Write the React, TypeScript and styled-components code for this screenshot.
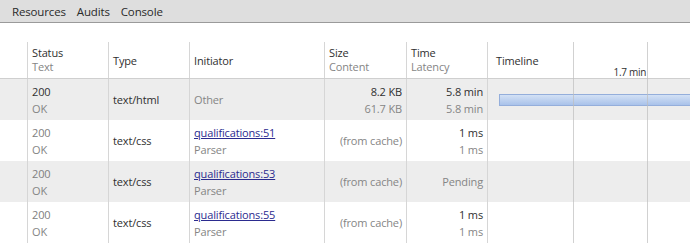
import React from "react";
import styled, { createGlobalStyle } from "styled-components";

const GlobalStyle = createGlobalStyle`
  html, body { margin: 0; padding: 0; background: #fff; overflow: hidden; }
  body { font-family: "Open Sans", "Noto Sans", "DejaVu Sans", sans-serif; font-size: 11px; letter-spacing: -0.15px; color: #303030; }
`;

const COLS = "27px 81px 81px 135px 82px 81px 1fr";

const Page = styled.div`
  width: 690px;
  height: 243px;
  overflow: hidden;
  display: flex;
  flex-direction: column;
`;

const Toolbar = styled.div`
  height: 22px;
  background: #dedede;
  border-bottom: 1px solid #9a9a9a;
  display: flex;
  align-items: center;
  gap: 11px;
  padding-left: 12px;
  font-size: 11.5px;
  color: #2a2a2a;
  flex-shrink: 0;
`;

const Tab = styled.span`
  line-height: 22px;
  padding-top: 1px;
`;

const Spacer = styled.div`
  height: 19px;
  flex-shrink: 0;
`;

const Table = styled.div`
  position: relative;
  flex: 1;
`;

const HeaderRow = styled.div`
  display: grid;
  grid-template-columns: ${COLS};
  height: 36px;
  border-bottom: 1px solid #cfcfcf;
`;

const Row = styled.div<{ $alt: boolean }>`
  display: grid;
  grid-template-columns: ${COLS};
  height: 41px;
  background: ${(p) => (p.$alt ? "#ededed" : "#ffffff")};
`;

const Cell = styled.div<{ $right?: boolean; $first?: boolean; $lh?: number }>`
  border-left: ${(p) => (p.$first ? "none" : "1px solid #d6d6d6")};
  padding: 0 4px;
  display: flex;
  flex-direction: column;
  justify-content: center;
  align-items: ${(p) => (p.$right ? "flex-end" : "flex-start")};
  line-height: ${(p) => p.$lh ?? 17}px;
  white-space: nowrap;
  overflow: hidden;
  position: relative;
`;

const TimelineCell = styled(Cell)`
  padding: 0;
  align-items: stretch;
`;

const Main = styled.span<{ $muted?: boolean }>`
  color: ${(p) => (p.$muted ? "#808080" : "#303030")};
`;

const Sub = styled.span`
  color: #858585;
`;

const Link = styled.a`
  color: #2b2b8f;
  text-decoration: underline;
  cursor: pointer;
`;

const TimelineHeader = styled.div`
  display: flex;
  height: 100%;
  align-items: center;
  padding-left: 8px;
  box-sizing: border-box;
  position: relative;
`;

const Tick = styled.span`
  position: absolute;
  left: 0;
  width: 158px;
  text-align: right;
  bottom: -1px;
  line-height: 13px;
  font-size: 10px;
  letter-spacing: -0.3px;
  color: #303030;
`;

const Bar = styled.div`
  margin-left: 11px;
  height: 10px;
  border: 1px solid #94aedb;
  border-right: none;
  background: linear-gradient(#d3e1f5, #a9c2ea);
`;

const GridLine = styled.div<{ $left: number }>`
  position: absolute;
  top: 0;
  bottom: 0;
  left: ${(p) => p.$left}px;
  width: 1px;
  background: rgba(190, 190, 190, 0.7);
`;

type Req = {
  status: string;
  cached: boolean;
  type: string;
  initiator?: string;
  link?: string;
  size: [string, string?];
  time: [string, string?];
  bar?: boolean;
};

const rows: Req[] = [
  { status: "200", cached: false, type: "text/html", initiator: "Other", size: ["8.2 KB", "61.7 KB"], time: ["5.8 min", "5.8 min"], bar: true },
  { status: "200", cached: true, type: "text/css", link: "qualifications:51", size: ["(from cache)"], time: ["1 ms", "1 ms"] },
  { status: "200", cached: true, type: "text/css", link: "qualifications:53", size: ["(from cache)"], time: ["Pending"] },
  { status: "200", cached: true, type: "text/css", link: "qualifications:55", size: ["(from cache)"], time: ["1 ms", "1 ms"] },
];

export default function App() {
  return (
    <Page>
      <GlobalStyle />
      <Toolbar>
        <Tab>Resources</Tab>
        <Tab>Audits</Tab>
        <Tab>Console</Tab>
      </Toolbar>
      <Spacer />
      <Table>
        <HeaderRow>
          <Cell $first />
          <Cell $lh={14}>
            <Main>Status</Main>
            <Sub>Text</Sub>
          </Cell>
          <Cell><Main>Type</Main></Cell>
          <Cell><Main>Initiator</Main></Cell>
          <Cell $lh={14}>
            <Main>Size</Main>
            <Sub>Content</Sub>
          </Cell>
          <Cell $lh={14}>
            <Main>Time</Main>
            <Sub>Latency</Sub>
          </Cell>
          <TimelineCell>
            <TimelineHeader>
              <Main>Timeline</Main>
              <Tick>1.7 min</Tick>
            </TimelineHeader>
          </TimelineCell>
        </HeaderRow>
        {rows.map((r, i) => (
          <Row key={i} $alt={i % 2 === 0}>
            <Cell $first />
            <Cell>
              <Main $muted={r.cached}>{r.status}</Main>
              <Sub>OK</Sub>
            </Cell>
            <Cell><Main>{r.type}</Main></Cell>
            <Cell>
              {r.link ? (
                <>
                  <Link>{r.link}</Link>
                  <Sub>Parser</Sub>
                </>
              ) : (
                <Sub>{r.initiator}</Sub>
              )}
            </Cell>
            <Cell $right>
              {r.size[1] ? (
                <>
                  <Main>{r.size[0]}</Main>
                  <Sub>{r.size[1]}</Sub>
                </>
              ) : (
                <Sub>{r.size[0]}</Sub>
              )}
            </Cell>
            <Cell $right>
              {r.time[1] ? (
                <>
                  <Main>{r.time[0]}</Main>
                  <Sub>{r.time[1]}</Sub>
                </>
              ) : (
                <Sub>{r.time[0]}</Sub>
              )}
            </Cell>
            <TimelineCell>{r.bar && <Bar />}</TimelineCell>
          </Row>
        ))}
        <GridLine $left={573} />
        <GridLine $left={647} />
      </Table>
    </Page>
  );
}
